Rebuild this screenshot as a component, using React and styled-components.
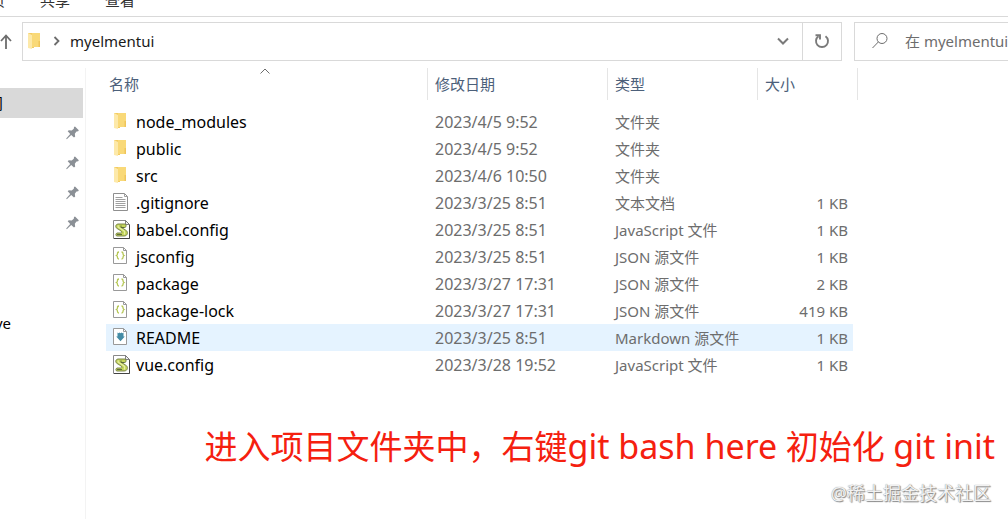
import React from 'react'
import styled, { createGlobalStyle } from 'styled-components'

const GlobalStyle = createGlobalStyle`
  * {
    box-sizing: border-box;
  }

  body {
    margin: 0;
    background: #fff;
    color: #000;
    font: 15px/27px 'Noto Sans', 'Noto Sans CJK SC', sans-serif;
    overflow: hidden;
  }

  button, input {
    font: inherit;
    border: 0;
    padding: 0;
    background: none;
  }

  svg {
    display: block;
    flex: none;
  }
`

const Explorer = styled.div`
  display: flex;
  flex-direction: column;
  min-height: 100vh;
`

const Tabs = styled.nav`
  display: flex;
  align-items: flex-end;
  gap: 35px;
  height: 17px;
  overflow: hidden;
  border-bottom: 1px solid #d9d9d9;
`

const Tab = styled.button`
  display: flex;
  justify-content: flex-end;
  width: ${({ $cut }) => ($cut ? '5px' : 'auto')};
  line-height: 24px;
  padding-bottom: 4px;
  color: #333;
  white-space: nowrap;
`

const Toolbar = styled.div`
  display: flex;
  align-items: center;
  height: 48px;
  overflow: hidden;
`

const UpButton = styled.button`
  display: flex;
  width: 22px;
  padding-top: 2px;
  color: #6d6d6d;
`

const AddressBar = styled.div`
  display: flex;
  align-items: center;
  flex: 1;
  height: 39px;
  padding-left: 4px;
  border: 1px solid #d9d9d9;
`

const Crumb = styled.button`
  margin-left: 9px;
  color: #1a1a1a;
`

const ChevronRight = styled.span`
  display: flex;
  margin-left: 8px;
  color: #6d6d6d;
`

const BarButton = styled.button`
  display: flex;
  align-items: center;
  justify-content: center;
  width: 39px;
  height: 37px;
  color: #7a7a7a;
  border-left: ${({ $divided }) => ($divided ? '1px solid #d9d9d9' : '0')};
`

const Spacer = styled.div`
  flex: 1;
`

const SearchBox = styled.label`
  display: flex;
  align-items: center;
  gap: 16px;
  width: 154px;
  height: 39px;
  margin-left: 12px;
  padding-left: 16px;
  border: 1px solid #d9d9d9;
  border-right: 0;
  color: #6d6d6d;
`

const SearchInput = styled.input`
  flex: 1;
  min-width: 0;
  outline: 0;

  &::placeholder {
    color: #6d6d6d;
    opacity: 1;
  }
`

const Body = styled.div`
  display: flex;
  flex: 1;
  padding-top: 3px;
`

const Sidebar = styled.aside`
  display: flex;
  flex-direction: column;
  width: 86px;
  padding: 20px 2px 0 0;
  border-right: 1px solid #f3f3f3;
`

const SideGroup = styled.div`
  margin-bottom: 70px;
`

const SideItem = styled.a`
  display: flex;
  align-items: center;
  justify-content: space-between;
  height: 30px;
  padding-right: 4px;
  color: #000;
  text-decoration: none;
  background: ${({ $active }) => ($active ? '#d9d9d9' : 'transparent')};
`

const SideLabel = styled.span`
  display: flex;
  justify-content: flex-end;
  width: ${({ $width }) => $width}px;
  overflow: hidden;
`

const Content = styled.main`
  display: flex;
  flex-direction: column;
  flex: 1;
  min-width: 0;
  padding-left: 20px;
`

const FileTable = styled.table`
  width: 752px;
  table-layout: fixed;
  border-collapse: separate;
  border-spacing: 0;
`

const HeadCell = styled.th`
  width: ${({ $width }) => $width}px;
  height: 32px;
  padding: ${({ $first }) => ($first ? '0 0 0 3px' : '0 0 0 7px')};
  border-right: 1px solid #e5e5e5;
  color: #4c607a;
  font-weight: 400;
  text-align: left;
`

const HeadInner = styled.div`
  display: grid;
  grid-template-columns: 1fr auto 1fr;
  align-items: start;
  height: 32px;
  padding-right: 6px;
  line-height: 32px;
`

const TableBody = styled.tbody`
  &::before {
    content: '';
    display: block;
    height: 8px;
  }
`

const FileRow = styled.tr`
  height: 27px;
  background: ${({ $active }) =>
    $active ? 'linear-gradient(to right, #e5f3ff calc(100% - 5px), #fff calc(100% - 5px))' : 'none'};
`

const Cell = styled.td`
  height: 27px;
  padding: 2px 10px 0 7px;
  color: #6d6d6d;
  line-height: 25px;
  text-align: ${({ $right }) => ($right ? 'right' : 'left')};
  white-space: nowrap;
`

const DateCell = styled(Cell)`
  font-size: 16px;
`

const NameCell = styled(Cell)`
  padding: 0 0 0 7px;
  color: #000;
`

const FileName = styled.div`
  display: flex;
  align-items: flex-start;
  gap: 5px;
  height: 27px;
  padding-top: 4px;
`

const FileLabel = styled.span`
  font-size: 16px;
  line-height: 21px;
`

const Note = styled.p`
  margin: 44px 13px 0 0;
  color: #f5200f;
  font-size: 33px;
  line-height: 48px;
  text-align: right;
  white-space: nowrap;
`

const Command = styled.span`
  font-size: 34px;
`

const Watermark = styled.footer`
  margin: 9px 17px 0 0;
  color: #f2f2f2;
  font-size: 18px;
  line-height: 27px;
  text-align: right;
  text-shadow: 0 0 1px #777, 1px 1px 1px #888;
`

const FolderIcon = () => (
  <svg width="18" height="18" viewBox="0 0 18 18">
    <path d="M1 1h6v15H1z" fill="#f3cb62" />
    <path d="M5 1h8v14H5z" fill="#f9d978" />
    <path d="M1 1l4 2v14l-4-1z" fill="#fde9a9" />
    <path d="M11.500 9H13v6h-1.500z" fill="#efc55b" />
  </svg>
)

const TextIcon = () => (
  <svg width="18" height="18" viewBox="0 0 18 18">
    <path d="M.5.5h11l3 3v14H.5z" fill="#fff" stroke="#8f8f8f" />
    <path d="M11.500.5v3h3M2.500 4.500h7M2.500 6.500h10M2.500 8.500h10M2.500 10.500h10M2.500 12.500h10M2.500 14.500h10" fill="none" stroke="#a0a0a0" />
  </svg>
)

const ScriptIcon = () => (
  <svg width="18" height="20" viewBox="0 0 18 20">
    <path d="M.5.5h12l4 4v14H.5z" fill="#fff" stroke="#888" />
    <path d="M16.500 5v13.500H1" fill="none" stroke="#444" />
    <path d="M12.500.5v4h4z" fill="#eee" stroke="#666" strokeWidth=".8" />
    <path d="M12 4H5C2 4.500 2 8 5 9l3 2c1.500 1 1 2-.5 2H4c-1.500.5-1.500 3 0 3h7c4 0 4.500-4.500 1.500-6L8.500 7.500H12c1.500-.5 1.500-3 0-3.500z" fill="#c3d45a" stroke="#6f7c42" strokeWidth=".9" />
    <path d="M5.500 5.500c-1 1 0 2 1 2.500l4 2.500c1.500 1 1.500 3 .5 4" fill="none" stroke="#e8f0a6" strokeWidth="1.200" />
    <path d="M8 5.500v2h3M4 14.500h5" fill="none" stroke="#56633a" strokeWidth=".9" />
  </svg>
)

const JsonIcon = () => (
  <svg width="18" height="18" viewBox="0 0 18 18">
    <path d="M.5.5h10l3 3v13H.5z" fill="#fff" stroke="#999" />
    <path d="M10.500.5v3h3" fill="none" stroke="#999" />
    <path d="M6 5c-1.500 0-1.500.5-1.500 1.500S4.500 8 3.500 8.500c1 .5 1 1 1 2S4.500 12 6 12M8.500 5C10 5 10 5.500 10 6.500s0 1.500 1 2c-1 .5-1 1-1 2s0 1.500-1.500 1.500" fill="none" stroke="#b5c653" strokeWidth="1.300" />
  </svg>
)

const MarkdownIcon = () => (
  <svg width="18" height="18" viewBox="0 0 18 18">
    <path d="M.5.5h10l3 3v13H.5z" fill="#fff" stroke="#999" />
    <path d="M10.500.5v3h3" fill="none" stroke="#999" />
    <path d="M4.500 4.500l1 .8 1-.8 1 .8 1-.8 1 .8 1-.8v4h1.300L7.500 13.300 3.200 8.500h1.300z" fill="#438ba5" />
  </svg>
)

const PinIcon = () => (
  <svg width="13" height="14" viewBox="0 0 13 14" fill="#8b9096">
    <path d="M8 1l1-.5L12.800 4.300l-.6 1-1.700.2L8.800 7.700l.4 2.800-1.200 1L5.200 9 .8 13.200.2 12.600 4.200 8 1.700 5.300l1.100-1.100 2.900.2L7.800 2.700z" />
  </svg>
)

const icons = {
  folder: FolderIcon,
  text: TextIcon,
  script: ScriptIcon,
  json: JsonIcon,
  markdown: MarkdownIcon,
}

const files = [
  { name: 'node_modules', date: '2023/4/5 9:52', type: '文件夹', icon: 'folder' },
  { name: 'public', date: '2023/4/5 9:52', type: '文件夹', icon: 'folder' },
  { name: 'src', date: '2023/4/6 10:50', type: '文件夹', icon: 'folder' },
  { name: '.gitignore', date: '2023/3/25 8:51', type: '文本文档', size: '1 KB', icon: 'text' },
  { name: 'babel.config', date: '2023/3/25 8:51', type: 'JavaScript 文件', size: '1 KB', icon: 'script' },
  { name: 'jsconfig', date: '2023/3/25 8:51', type: 'JSON 源文件', size: '1 KB', icon: 'json' },
  { name: 'package', date: '2023/3/27 17:31', type: 'JSON 源文件', size: '2 KB', icon: 'json' },
  { name: 'package-lock', date: '2023/3/27 17:31', type: 'JSON 源文件', size: '419 KB', icon: 'json' },
  { name: 'README', date: '2023/3/25 8:51', type: 'Markdown 源文件', size: '1 KB', icon: 'markdown', active: true },
  { name: 'vue.config', date: '2023/3/28 19:52', type: 'JavaScript 文件', size: '1 KB', icon: 'script' },
]

const sideItems = [
  { label: '问', width: 3, active: true },
  { pinned: true },
  { pinned: true },
  { pinned: true },
  { pinned: true },
]

export default function App() {
  return (
    <>
      <GlobalStyle />
      <Explorer>
        <Tabs>
          <Tab $cut>页</Tab>
          <Tab>共享</Tab>
          <Tab>查看</Tab>
        </Tabs>

        <Toolbar>
          <UpButton aria-label="up">
            <svg width="12" height="18" viewBox="0 0 12 18" fill="none" stroke="currentColor" strokeWidth="1.800">
              <path d="M6 16V3M1 8l5-5.500L11 8" />
            </svg>
          </UpButton>
          <AddressBar>
            <FolderIcon />
            <ChevronRight>
              <svg width="8" height="10" viewBox="0 0 8 10" fill="none" stroke="currentColor" strokeWidth="1.800">
                <path d="M1.500 1l4 4-4 4" />
              </svg>
            </ChevronRight>
            <Crumb>myelmentui</Crumb>
            <Spacer />
            <BarButton aria-label="history">
              <svg width="12" height="8" viewBox="0 0 12 8" fill="none" stroke="currentColor" strokeWidth="2">
                <path d="M1 1.500l5 5 5-5" />
              </svg>
            </BarButton>
            <BarButton $divided aria-label="refresh">
              <svg width="16" height="16" viewBox="0 0 16 16" fill="none" stroke="currentColor" strokeWidth="1.900">
                <path d="M11.500 3.200a6 6 0 1 1-7 0" />
                <path d="M1.500 2.200H6v4.300" />
              </svg>
            </BarButton>
          </AddressBar>
          <SearchBox>
            <svg width="18" height="18" viewBox="0 0 18 18" fill="none" stroke="currentColor">
              <circle cx="11" cy="6.500" r="5" />
              <path d="M7.300 10L1.500 16" />
            </svg>
            <SearchInput type="text" placeholder="在 myelmentui 中搜索" aria-label="search" />
          </SearchBox>
        </Toolbar>

        <Body>
          <Sidebar>
            <SideGroup>
              {sideItems.map((item, i) => (
                <SideItem href="#" key={i} $active={item.active}>
                  <SideLabel $width={item.width || 0}>{item.label}</SideLabel>
                  {item.pinned && <PinIcon />}
                </SideItem>
              ))}
            </SideGroup>
            <SideItem href="#">
              <SideLabel $width={11}>ve</SideLabel>
            </SideItem>
          </Sidebar>

          <Content>
            <FileTable>
              <thead>
                <tr>
                  <HeadCell $width={322} $first>
                    <HeadInner>
                      名称
                      <svg width="10" height="8" viewBox="0 0 10 8" fill="none" stroke="#6d6d6d">
                        <path d="M.5 5.500L5 1l4.500 4.500" />
                      </svg>
                    </HeadInner>
                  </HeadCell>
                  <HeadCell $width={180}>修改日期</HeadCell>
                  <HeadCell $width={150}>类型</HeadCell>
                  <HeadCell $width={100}>大小</HeadCell>
                </tr>
              </thead>
              <TableBody>
                {files.map((file) => {
                  const Icon = icons[file.icon]
                  return (
                    <FileRow key={file.name} $active={file.active}>
                      <NameCell>
                        <FileName>
                          <Icon />
                          <FileLabel>{file.name}</FileLabel>
                        </FileName>
                      </NameCell>
                      <DateCell>{file.date}</DateCell>
                      <Cell>{file.type}</Cell>
                      <Cell $right>{file.size}</Cell>
                    </FileRow>
                  )
                })}
              </TableBody>
            </FileTable>

            <Note>
              进入项目文件夹中，右键<Command>git bash here</Command> 初始化 <Command>git init</Command>
            </Note>
            <Watermark>@稀土掘金技术社区</Watermark>
          </Content>
        </Body>
      </Explorer>
    </>
  )
}
